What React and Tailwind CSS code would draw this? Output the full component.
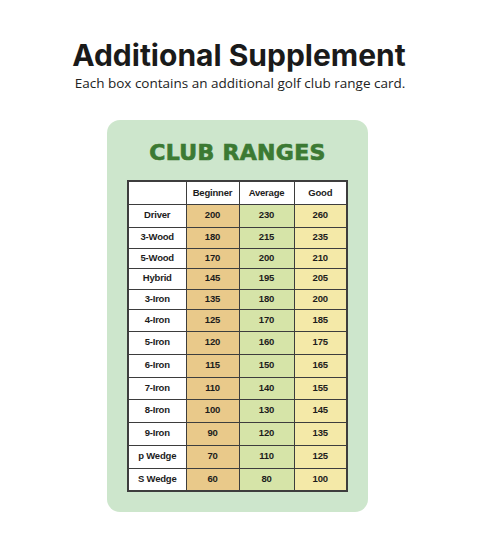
import React from 'react';

const rows = [
  { club: 'Driver', beg: 200, avg: 230, good: 260, h: 'h-[23px]' },
  { club: '3-Wood', beg: 180, avg: 215, good: 235, h: 'h-[21px]' },
  { club: '5-Wood', beg: 170, avg: 200, good: 210, h: 'h-[20px]' },
  { club: 'Hybrid', beg: 145, avg: 195, good: 205, h: 'h-[21px]' },
  { club: '3-Iron', beg: 135, avg: 180, good: 200, h: 'h-[20px]' },
  { club: '4-Iron', beg: 125, avg: 170, good: 185, h: 'h-[22px]' },
  { club: '5-Iron', beg: 120, avg: 160, good: 175, h: 'h-[23px]' },
  { club: '6-Iron', beg: 115, avg: 150, good: 165, h: 'h-[23px]' },
  { club: '7-Iron', beg: 110, avg: 140, good: 155, h: 'h-[22px]' },
  { club: '8-Iron', beg: 100, avg: 130, good: 145, h: 'h-[23px]' },
  { club: '9-Iron', beg: 90, avg: 120, good: 135, h: 'h-[23px]' },
  { club: 'p Wedge', beg: 70, avg: 110, good: 125, h: 'h-[23px]' },
  { club: 'S Wedge', beg: 60, avg: 80, good: 100, h: 'h-[23px]' },
];

const cell = 'border border-[#3d3d3d] text-center p-0 align-middle';

export default function App() {
  return (
    <div className="w-[480px] h-[554px] bg-white flex flex-col items-center pt-[37px]">
      <h1 className="text-[30px] leading-[36px] font-bold text-[#1a1a1a] font-['Inter',sans-serif] ml-[-2px]">
        Additional Supplement
      </h1>
      <p className="text-[13.5px] leading-[18px] mt-[1px] text-[#222] font-['Open_Sans',sans-serif]">
        Each box contains an additional golf club range card.
      </p>

      <div className="self-start ml-[107px] mt-[28px] w-[261px] h-[392px] rounded-[13px] bg-[#cde6cc] flex flex-col items-center pt-[20px]">
        <h2 className="text-[22px] leading-[26px] font-bold text-[#3c7a33] font-['DejaVu_Sans',sans-serif] tracking-[0.3px] [-webkit-text-stroke:0.7px_#3c7a33]">
          CLUB RANGES
        </h2>
        <table className="mt-[14px] border-collapse border-2 border-[#3d3d3d] font-['Liberation_Sans',Arial,sans-serif] font-bold text-[9.5px] tracking-[-0.2px] text-[#1c1c1c]">
          <colgroup>
            <col className="w-[58px]" />
            <col className="w-[53px]" />
            <col className="w-[55px]" />
            <col className="w-[53px]" />
          </colgroup>
          <thead>
            <tr className="h-[23px] bg-white">
              <th className={cell}></th>
              <th className={cell}>Beginner</th>
              <th className={cell}>Average</th>
              <th className={cell}>Good</th>
            </tr>
          </thead>
          <tbody>
            {rows.map(r => (
              <tr key={r.club} className={r.h}>
                <td className={`${cell} bg-white`}>{r.club}</td>
                <td className={`${cell} bg-[#e9c98a]`}>{r.beg}</td>
                <td className={`${cell} bg-[#d6e4a8]`}>{r.avg}</td>
                <td className={`${cell} bg-[#f4e9a8]`}>{r.good}</td>
              </tr>
            ))}
          </tbody>
        </table>
      </div>
    </div>
  );
}
